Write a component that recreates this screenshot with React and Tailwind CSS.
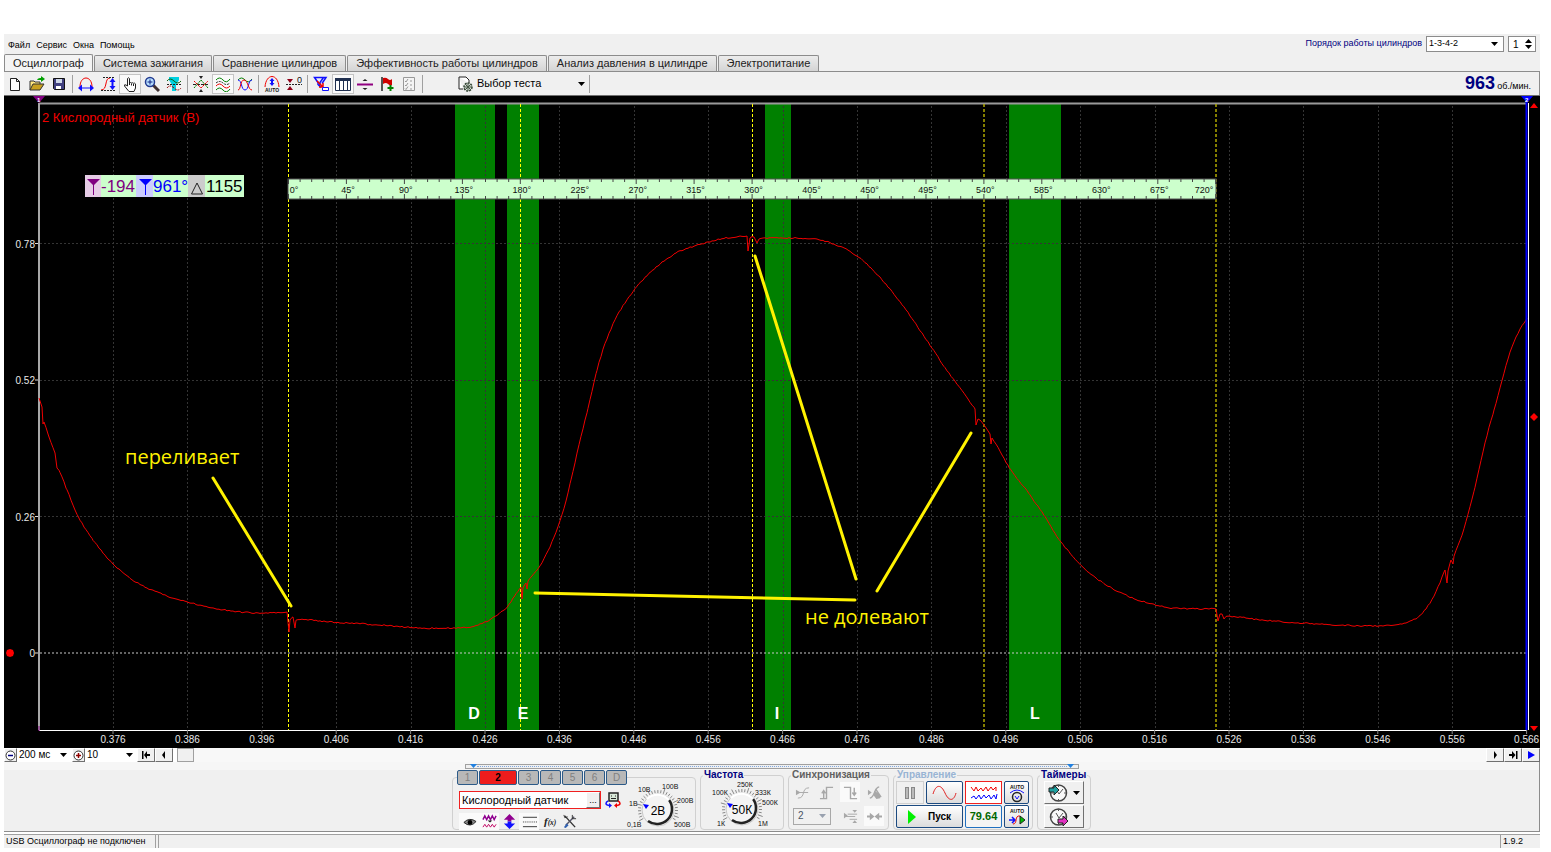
import React, { useState } from 'react'

const TABS = [
  'Осциллограф',
  'Система зажигания',
  'Сравнение цилиндров',
  'Эффективность работы цилиндров',
  'Анализ давления в цилиндре',
  'Электропитание',
]

const MENU = ['Файл', 'Сервис', 'Окна', 'Помощь']

// smooth pieces of the sensor signal, the kinks between them stay sharp
const TRACE = [
  [[39, 398], [42, 407]],
  [[43, 424], [44, 422], [49, 437], [55, 453]],
  [[57, 468], [60, 472], [67, 490], [78, 516], [93, 540], [113, 564], [130, 578], [143, 586], [167, 596], [188, 602], [213, 608], [240, 612], [262, 613], [287, 612]],
  [[289, 632], [290, 620], [293, 617]],
  [[295, 628], [296, 620], [330, 622], [380, 625], [420, 628], [450, 628], [470, 627], [485, 622], [497, 615], [507, 607], [514, 597], [521, 587]],
  [[522, 599], [523, 588], [526, 583]],
  [[527, 589], [528, 581], [540, 566], [552, 542], [562, 515], [571, 480], [579, 445], [588, 408], [597, 370], [605, 344], [617, 316], [635, 289], [654, 269], [668, 258], [680, 251], [708, 242], [726, 238], [747, 236]],
  [[748, 251], [750, 238], [754, 237]],
  [[757, 243], [759, 239], [785, 238], [815, 239], [828, 242], [851, 252], [872, 269], [900, 302], [930, 345], [945, 368], [960, 388], [975, 409]],
  [[976, 425], [978, 419], [984, 425], [990, 434]],
  [[991, 444], [992, 438], [1009, 467], [1030, 495], [1045, 517], [1061, 542], [1081, 565], [1100, 581], [1130, 597], [1152, 604], [1171, 608], [1216, 609]],
  [[1218, 621], [1220, 614], [1222, 614]],
  [[1224, 619], [1226, 616], [1262, 620], [1300, 623], [1337, 625], [1379, 626], [1400, 624], [1415, 619], [1424, 611], [1434, 596], [1445, 570]],
  [[1447, 583], [1448, 571], [1451, 560]],
  [[1453, 564], [1454, 556], [1462, 535], [1475, 487], [1485, 443], [1494, 410], [1502, 381], [1510, 352], [1518, 333], [1527, 318]],
]

const noise = (x) => {
  const n = Math.sin(x * 127.1) * 43758.5
  return (n - Math.floor(n) - 0.5) * 1.3
}

function spline(pts) {
  const out = []
  for (let i = 0; i < pts.length - 1; i++) {
    const p1 = pts[i]
    const p2 = pts[i + 1]
    const m = (a, b) => (b[0] - a[0] ? (b[1] - a[1]) / (b[0] - a[0]) : 0)
    const s1 = m(pts[i - 1] || p1, p2)
    const s2 = m(p1, pts[i + 2] || p2)
    const h = p2[0] - p1[0]
    for (let x = p1[0]; x < p2[0]; x += 2) {
      const t = (x - p1[0]) / h
      const y =
        (2 * t ** 3 - 3 * t ** 2 + 1) * p1[1] +
        (t ** 3 - 2 * t ** 2 + t) * h * s1 +
        (-2 * t ** 3 + 3 * t ** 2) * p2[1] +
        (t ** 3 - t ** 2) * h * s2
      out.push([x, y + (h > 6 ? noise(x) : 0)])
    }
  }
  out.push(pts[pts.length - 1])
  return out
}

const tracePoints = TRACE.flatMap(spline).map(([x, y]) => `${x},${y.toFixed(1)}`).join(' ')

const BANDS = [
  { x: 455, w: 40, label: 'D', lx: 474 },
  { x: 507, w: 32, label: 'E', lx: 523 },
  { x: 765, w: 26, label: 'I', lx: 777 },
  { x: 1009, w: 52, label: 'L', lx: 1035 },
]
const TIMES = Array.from({ length: 20 }, (_, i) => ({ x: 113 + i * 74.4, label: (0.376 + i * 0.01).toFixed(3) }))
const LEVELS = [[243.5, '0.78'], [380, '0.52'], [516.5, '0.26']]
const STROKES = [288.5, 520.5, 752.5, 984, 1216]
const ARROWS = ['M213 478L291 606', 'M755 256L856 579', 'M971 433L877 591', 'M535 593L855 600']

function Chart() {
  return (
    <svg viewBox="4 96 1536 652" className="block w-full h-auto bg-black font-['Liberation_Sans',sans-serif]">
      {BANDS.map((b) => (
        <rect key={b.label} x={b.x} y="103" width={b.w} height="627" fill="#008000" />
      ))}
      <g stroke="#343434" strokeDasharray="2 2" shapeRendering="crispEdges">
        {TIMES.slice(0, 19).map((t) => <path key={t.label} d={`M${Math.round(t.x) + 0.5} 106V730`} />)}
        {LEVELS.map(([y]) => <path key={y} d={`M40 ${y}H1526`} />)}
      </g>
      <path d="M40 653H1526" stroke="#c8c8c8" strokeDasharray="2 2" />
      <path d="M35 243.5h4M35 380h4M35 516.5h4M35 653h4" stroke="#ddd" />
      <path d="M39 103.500H1527" stroke="#9a9a9a" strokeWidth="2" />
      <path d="M39 103V730" stroke="#a8a8a8" strokeWidth="2" />
      <path d="M39 730.5H1527" stroke="#fff" />
      <path d={TIMES.map((t) => `M${t.x} 730v4`).join('')} stroke="#888" />
      {STROKES.map((x, i) => (
        <path key={x} d={`M${x} 104V730`} stroke={i > 2 ? '#b0a800' : '#ffff00'} strokeWidth={i > 2 ? 1.5 : 1} strokeDasharray="3 2" />
      ))}
      <polyline points={tracePoints} fill="none" stroke="#f00000" />
      <path d="M1526.500 98V730" stroke="#00f" strokeWidth="2" />
      <path d="M1528.500 103V730" stroke="#fff" />

      {/* cursor flags and level markers */}
      <path d="M33 96h12l-6 7z" fill="#800080" />
      <path d="M1521 96h12l-6 7z" fill="#00f" />
      <text x="37" y="102" fontSize="6" fontWeight="bold" fill="#fff">1</text>
      <text x="1525" y="102" fontSize="6" fontWeight="bold" fill="#fff">2</text>
      <path d="M1534 103l4 5h-8z" fill="#f00" />
      <path d="M1534 731l4-5h-8z" fill="#f00" />
      <path d="M1534 413l4 4l-4 4l-4-4z" fill="#f00" />
      <path d="M10 649l3 1l1 3l-1 3l-3 1l-3-1l-1-3l1-3z" fill="#f00" />
      <path d="M39 726v5" stroke="#800080" />

      <text x="42" y="122" fontSize="13" fill="#f00000">2 Кислородный датчик (В)</text>
      <g fontSize="10" fill="#e8e8e8" textAnchor="end">
        {[...LEVELS, [653, '0']].map(([y, s]) => <text key={s} x="35" y={y + 4}>{s}</text>)}
      </g>
      <g fontSize="10" fill="#e8e8e8" textAnchor="middle">
        {TIMES.map((t) => <text key={t.label} x={t.x} y="743">{t.label}</text>)}
      </g>
      <g fontSize="16" fontWeight="bold" fill="#fff" textAnchor="middle">
        {BANDS.map((b) => <text key={b.label} x={b.lx} y="719">{b.label}</text>)}
      </g>

      {/* angle ruler */}
      <rect x="288" y="179" width="928" height="20" fill="#ccffcc" stroke="#555" strokeWidth="1" />
      <path
        d={Array.from({ length: 81 }, (_, i) => {
          const n = i % 5 === 0 ? 5 : 3
          return `M${(288.5 + i * 11.59).toFixed(1)} 179v${n}m0 ${20 - n * 2}v${n}`
        }).join('')}
        stroke="#444"
      />
      <g fontSize="9" fill="#101010" textAnchor="middle">
        {Array.from({ length: 17 }, (_, i) => (
          <text key={i} x={i === 0 ? 294 : i === 16 ? 1204 : 290 + i * 57.95} y="193">{`${i * 45}°`}</text>
        ))}
      </g>

      {/* cursor readout */}
      <rect x="85" y="175" width="159" height="22" fill="#ccffcc" />
      <rect x="85" y="175" width="16" height="22" fill="#e6cce6" />
      <rect x="136" y="175" width="17" height="22" fill="#ccccff" />
      <rect x="188" y="175" width="17" height="22" fill="#cccccc" />
      <path d="M87 179h13l-6 6v10h-1v-10z" fill="#800080" />
      <path d="M139 179h13l-6 6v10h-1v-10z" fill="#0000ff" />
      <path d="M197 183l5.500 11h-11z" fill="none" stroke="#222" />
      <g fontSize="17">
        <text x="101" y="192" fill="#800080">-194</text>
        <text x="153" y="192" fill="#0000ff">961°</text>
        <text x="206" y="192" fill="#000">1155</text>
      </g>

      <path d={ARROWS.join('')} stroke="#fff200" strokeWidth="3" strokeLinecap="round" />
      <g fontSize="20" fill="#fff200" className="font-['Open_Sans',sans-serif]">
        <text x="125" y="464">переливает</text>
        <text x="805" y="624">не долевают</text>
      </g>
    </svg>
  )
}

const R = '#f00000'
const B = '#1010ff'
const G = '#008000'

const ICONS = {
  new: <path d="M3.500 2.500h6l3 3v9h-9zM9.500 2.500v3h3" fill="#fff" stroke="#222" />,
  open: (
    <>
      <path d="M1 14V5h4l1 1h5v2" fill="#ffe680" stroke="#333" />
      <path d="M1 14l3-6h11l-4 6z" fill="#c8a020" stroke="#333" />
      <path d="M8 4c1-2 3-2 4-2V0l4 3l-4 3V4z" fill="#00a000" />
    </>
  ),
  save: (
    <>
      <path d="M2.500 2.500h11v11h-10l-1-1z" fill="#404080" stroke="#111" />
      <path d="M5 3h6v4H5z" fill="#cfd8e8" />
      <path d="M5 10h5v3H5z" fill="#fff" />
    </>
  ),
  hspan: (
    <>
      <path d="M2 11C2-1 14-1 14 11" stroke={R} />
      <path d="M0 12l4-3.500v3h8v-3l4 3.500l-4 3.500v-3H4v3z" fill={B} />
    </>
  ),
  vspan: (
    <>
      <path d="M1 14c7 0 3-12 9-12" stroke={R} />
      <path d="M1 14.500h14M3 1.500h12" stroke="#222" strokeDasharray="2 1" />
      <path d="M12.500 2l3 4h-2v4h2l-3 4l-3-4h2V6h-2z" fill={B} />
    </>
  ),
  hand: (
    <>
      <path d="M5.500 10V2.500q1-1.500 2 0V7q1-1 2 0q1-.7 2 .3q1-.7 2 .6V12l-1.500 3.500h-5L2.500 10q-.3-2 1.500-1z" fill="#fff" stroke="#222" />
      <path d="M7.500 7v2M9.500 7.500v2M11.500 8v2" stroke="#222" />
    </>
  ),
  zoom: (
    <>
      <path d="M9 9l6 6" stroke="#403030" strokeWidth="3" />
      <circle cx="6" cy="6" r="4.500" fill="#b8e0ff" stroke="#223a90" strokeWidth="1.500" />
      <path d="M6 3.500v5M3.500 6h5" stroke="#102080" />
    </>
  ),
  filter: (
    <>
      <path d="M3 1h10v3l-3 5v6H6V9L3 4z" fill="#00d0e0" />
      <path d="M1 5q3-4 7 0t7 0" stroke="#106010" />
      <path d="M1 8.500h14" stroke="#222" strokeDasharray="2 1" />
      <path d="M1 12q3-4 7 0t7 0" stroke="#900" strokeDasharray="2 1" />
    </>
  ),
  fit: (
    <>
      <path d="M0 8.500h16" stroke="#222" strokeDasharray="3 1" />
      <path d="M1 12l7-8l7 8" stroke={G} strokeDasharray="2 .5" />
      <path d="M1 5l7 7l7-7" stroke={R} strokeDasharray="2 .5" />
      <path d="M6 0h4L8 3zM6 16h4l-2-3z" fill="#222" />
    </>
  ),
  waves: (
    <>
      <path d="M1 4q3.500-4 7 0t7-1" stroke={G} />
      <path d="M1 7q3.500-3 7 0t7 0" stroke="#222" strokeDasharray="2 1" />
      <path d="M1 10q3.500-4 7 0t7 0" stroke={R} />
      <path d="M1 14q3.500-4 7 0t7-1" stroke={G} />
    </>
  ),
  overlay: (
    <>
      <path d="M1 4q3.500-4 7 0t7-1" stroke={G} />
      <path d="M1 4c4 0 3 10 7 10s3-10 7-10" stroke={B} />
      <path d="M1 14C4 14 3 4 7 4s4 10 8 10" stroke={R} />
    </>
  ),
  auto: (
    <>
      <path d="M1 11C2-3 14-3 15 11" stroke={R} />
      <path d="M8 2l2.500 3H9v2h1.500L8 10L5.500 7H7V5H5.500z" fill={B} />
      <text x="8" y="15.500" fontSize="5" fontWeight="bold" textAnchor="middle" fill="#111">AUTO</text>
    </>
  ),
  zero: (
    <>
      <path d="M0 8.500h16" stroke="#222" strokeDasharray="2 1" />
      <path d="M1 3h6L4 7zM1 14h6l-3-4z" fill="#900018" />
      <text x="11" y="7" fontSize="9" fill="#111">0</text>
    </>
  ),
  trigger: (
    <>
      <path d="M1.500 1.500h9l-3.500 5v4l-2-2v-2zM4 1.500h9l-4 6" stroke={B} strokeWidth="1.500" />
      <path d="M4 5l6 6M10 7v4H6" stroke={R} strokeWidth="1.500" />
      <path d="M9.500 11.500h6v3h-6z" fill="#fff" stroke={B} />
    </>
  ),
  table: (
    <>
      <path d="M.5 2.500h15v12H.5zM4.500 5v9M8.500 5v9M12.500 5v9" fill="#fff" stroke="#203050" />
      <path d="M0 2h16v3H0z" fill="#203050" />
    </>
  ),
  split: (
    <>
      <path d="M0 8.500h16" stroke="#900080" strokeWidth="2" />
      <path d="M5.500 5h5L8 3zM5.500 12h5L8 14z" fill="#222" />
    </>
  ),
  flag: (
    <>
      <path d="M3 1v14" stroke="#222" strokeWidth="1.500" />
      <path d="M4 2q3-1 5 1t4 0v6q-2 1-4-1T4 8z" fill="#d00000" />
      <path d="M11.500 9v6M8.500 12h6" stroke={G} strokeWidth="2" />
    </>
  ),
  list: (
    <>
      <path d="M2.500 1.500h11v13h-11z" fill="#f4f4f4" stroke="#999" />
      <path d="M4 5l1 1l2-3M4 9l1 1l2-3M4 12.500l1 1l2-3M9 5h2M9 9h2M9 13h2" stroke="#999" />
    </>
  ),
  test: (
    <>
      <path d="M2 1h7l3 3v3M2 1v12h4" fill="#fff" stroke="#222" />
      <circle cx="11" cy="11" r="4" fill="#d8e0d8" stroke="#334433" strokeDasharray="2 1" strokeWidth="1.500" />
      <path d="M7 11h8M11 7v8M8 8l6 6M14 8l-6 6" stroke="#445544" />
    </>
  ),
  link: (
    <>
      <path d="M4 1h9v8H4z" fill="#d8e8d8" stroke="#222" strokeWidth="1.500" />
      <path d="M6 4h1M10 4h1M6 6.500h5" stroke="#222" />
      <path d="M3 9q-2 1-2 2.500T4 13.500" stroke={B} strokeWidth="1.500" />
      <path d="M4 11v5l3-2.500z" fill={B} />
      <path d="M13 9q2 1 2 2.500t-3 2" stroke={R} strokeWidth="1.500" />
      <path d="M12 11v5l-3-2.500z" fill={R} />
    </>
  ),
  eye: (
    <>
      <path d="M2 9q6-6 13-1q-6 7-13 1z" fill="#888" stroke="#222" />
      <circle cx="8.500" cy="9" r="2.500" fill="#000" />
    </>
  ),
  squeeze: (
    <>
      <path d="M1 6l2-4l2 4l2-4l2 4l2-4l2 4l2-4" stroke="#900090" strokeWidth="1.500" />
      <path d="M6 7h5L8.500 9z" fill="#222" />
      <path d="M1 14l2-3l2 3l2-3l2 3l2-3l2 3l2-3" stroke="#c00060" />
    </>
  ),
  invert: (
    <>
      <path d="M8 0l6 6h-4v2H6V6H2z" fill="#900090" />
      <path d="M8 16l6-6h-4V8H6v2H2z" fill={B} />
    </>
  ),
  lines: (
    <>
      <path d="M1 3.500h15M1 13.500h15" stroke="#333" />
      <path d="M1 8.500h15" stroke="#333" strokeDasharray="1 1" />
    </>
  ),
  fx: <text x="2" y="12" fontSize="12" fontStyle="italic" fontWeight="bold" fill="#222" className="font-['Liberation_Serif',serif]">f<tspan fontSize="8">(x)</tspan></text>,
  tools: (
    <>
      <path d="M3 2l11 12" stroke="#333" strokeWidth="1.500" />
      <path d="M13 3L4 12" stroke="#556" strokeWidth="1.500" />
      <path d="M2 14l3-4l2 2l-3 3z" fill="#3060b0" />
      <path d="M11 1v4h4M2 1l1 3l3-1" stroke="#333" />
    </>
  ),
  syncAny: (
    <>
      <path d="M1 5v6l5-3z" fill="#a8a8a8" />
      <path d="M3 14c9 0 3-11 12-11M4 8h10" stroke="#a8a8a8" />
    </>
  ),
  syncRise: <path d="M1 14.500h7v-12h7M5 14V7M3 9l2-3l2 3" stroke="#a8a8a8" strokeWidth="1.500" />,
  syncFall: <path d="M1 2.500h7v12h7M12 3v7M10 8l2 3l2-3" stroke="#a8a8a8" strokeWidth="1.500" />,
  syncHand: (
    <>
      <path d="M1 5v6l4-3zM8 6l6 4v4l-4 1l-3-4z" fill="#a8a8a8" />
      <path d="M3 14C9 13 7 3 13 2M9 4l6 9" stroke="#a8a8a8" strokeWidth="1.500" />
    </>
  ),
  syncLevel: (
    <>
      <path d="M1 4v6l4-3zM10 1h5l-2.500 3zM10 15h5l-2.500-3z" fill="#a8a8a8" />
      <path d="M5 5.500h10M3 8h10M7 11h8" stroke="#a8a8a8" />
    </>
  ),
  syncIn: (
    <>
      <path d="M0 8h5M16 8h-5" stroke="#a8a8a8" strokeWidth="2" />
      <path d="M3 4v8l5-4zM13 4v8L8 8z" fill="#a8a8a8" />
    </>
  ),
}

function Icon({ name, className = 'w-4 h-4' }) {
  return <svg viewBox="0 0 16 16" fill="none" className={`${className} shrink-0`} aria-hidden="true">{ICONS[name]}</svg>
}

function Caret({ className = 'fill-black' }) {
  return <svg viewBox="0 0 7 4" className={`${className} w-[7px] h-1 shrink-0`} aria-hidden="true"><path d="M0 0h7L3.500 4z" /></svg>
}

function Select({ label, options, className, muted }) {
  return (
    <span className={`relative flex items-center ${className}`}>
      <select aria-label={label} className={`appearance-none w-full h-full bg-transparent pl-0.5 text-[10px] leading-3 ${muted ? 'text-gray-600' : 'text-black'}`}>
        {options.map((o) => <option key={o}>{o}</option>)}
      </select>
      <span className="absolute right-1 pointer-events-none flex"><Caret className={muted ? 'fill-gray-400' : 'fill-black'} /></span>
    </span>
  )
}

const TOOLBAR = [
  ['new', 'open', 'save'],
  ['hspan', 'vspan', 'hand', 'zoom', 'filter'],
  ['fit', 'waves', 'overlay'],
  ['auto', 'zero'],
  ['trigger', 'table', 'split', 'flag', 'list'],
]
const PRESSED = ['hand', 'waves', 'table']

function Toolbar() {
  return (
    <div className="flex items-center h-6 border-t border-r border-[#8c8c8c] bg-[#f0f0f0]">
      {TOOLBAR.map((group, i) => (
        <div key={i} className="flex items-center">
          {group.map((name) => (
            <button key={name} aria-label={name} className={`w-[22px] h-[20px] flex items-center justify-center ${PRESSED.includes(name) ? 'bg-[#fafafa] border border-[#c4c4c4]' : ''}`}>
              <Icon name={name} />
            </button>
          ))}
          <span className="w-px h-[18px] bg-[#a0a0a0] mx-0.5" />
        </div>
      ))}
      <button className="flex items-center gap-1 ml-8 w-[128px] text-[11px]">
        <Icon name="test" />
        <span className="flex-1 text-left">Выбор теста</span>
        <Caret />
      </button>
      <span className="w-px h-[18px] bg-[#a0a0a0] ml-1" />
      <div className="ml-auto flex items-baseline gap-0.5 pr-2">
        <span className="text-[18px] leading-5 font-bold text-[#000080]">963</span>
        <span className="text-[9px]">об./мин.</span>
      </div>
    </div>
  )
}

const bevel = 'border border-t-white border-l-white border-r-[#707070] border-b-[#707070] bg-[#f0f0f0] flex items-center justify-center'

function NavButton({ label, d, blue }) {
  return (
    <button aria-label={label} className={`${bevel} w-[18px] h-[14px]`}>
      <svg viewBox="0 0 10 8" className="w-[10px] h-2" fill={blue ? '#0000ff' : '#000'}><path d={d} /></svg>
    </button>
  )
}

function ZoomButton({ label, d, color }) {
  return (
    <button aria-label={label} className={`${bevel} w-[13px] h-[14px]`}>
      <svg viewBox="0 0 11 11" className="w-[11px] h-[11px] shrink-0" fill="none">
        <circle cx="5.500" cy="5.500" r="4.500" fill="#fff" stroke="#333" />
        <path d={d} stroke={color} strokeWidth="1.500" />
      </svg>
    </button>
  )
}

function TimeBar() {
  return (
    <div className="flex items-center h-[14px] bg-white">
      <ZoomButton label="Уменьшить" d="M3 5.500h5" color="#000080" />
      <Select label="Развёртка" options={['200 мс', '100 мс']} className="w-[54px] h-[14px]" />
      <span className="w-px" />
      <ZoomButton label="Увеличить" d="M3 5.500h5M5.500 3v5" color="#900000" />
      <Select label="Масштаб" options={['10', '20']} className="w-[52px] h-[14px]" />
      <NavButton label="В начало" d="M1 0h1.500v8H1zM6 0v8L3 4zM6 3h3v2H6z" />
      <NavButton label="Назад" d="M6 0v8L3 4z" />
      <input type="range" aria-label="Прокрутка" defaultValue="0" className="appearance-none flex-1 min-w-0 h-[14px] ml-1 bg-[#f8f8f8] [&::-webkit-slider-thumb]:appearance-none [&::-webkit-slider-thumb]:w-[17px] [&::-webkit-slider-thumb]:h-[14px] [&::-webkit-slider-thumb]:bg-[#f0f0f0] [&::-webkit-slider-thumb]:border [&::-webkit-slider-thumb]:border-[#a0a0a0]" />
      <NavButton label="Вперёд" d="M4 0v8l3-4z" />
      <NavButton label="В конец" d="M8 0h1.500v8H8zM4 0v8l3.500-4zM1 3h3v2H1z" />
      <NavButton label="Воспроизвести" d="M2 0v8l7-4z" blue />
    </div>
  )
}

function Dial({ value, marks, label }) {
  const ticks = Array.from({ length: 27 }, (_, i) => ((150 + i * 9.2) * Math.PI) / 180)
  return (
    <svg viewBox="0 0 74 54" className="w-[74px] h-[54px] shrink-0" role="img" aria-label={label}>
      <path
        d={ticks.map((a, i) => {
          const r = i % 5 === 0 ? 22 : 20
          return `M${37 + 17 * Math.cos(a)} ${33 + 17 * Math.sin(a)}L${37 + r * Math.cos(a)} ${33 + r * Math.sin(a)}`
        }).join('')}
        stroke="#888"
      />
      <circle cx="37" cy="33" r="16" fill="#f4f4f4" stroke="#c8c8c8" strokeWidth="1" />
      <path d="M48 23A15 15 0 0 1 27 44" fill="none" stroke="#222" strokeWidth="2.500" />
      <path d="M26 22A15 15 0 0 1 48 23" fill="none" stroke="#fff" strokeWidth="2" />
      <path d="M22 27l6 1l-3 4z" fill="#0000ff" />
      <text x="37" y="38" fontSize="12" textAnchor="middle">{value}</text>
      <g fontSize="7" fill="#111">
        {marks.map(([x, y, s]) => <text key={s} x={x} y={y}>{s}</text>)}
      </g>
    </svg>
  )
}

function Group({ title, titleClass, className, children }) {
  return (
    <fieldset className={`h-[60px] rounded border border-[#d0d0d0] ${className}`}>
      <legend className={`ml-0.5 px-px h-[10px] text-[10px] leading-[10px] font-bold whitespace-nowrap ${titleClass}`}>{title}</legend>
      {children}
    </fieldset>
  )
}

const VOLT_MARKS = [[6, 50, '0,1В'], [8, 29, '1В'], [17, 15, '10В'], [41, 12, '100В'], [56, 26, '200В'], [53, 50, '500В']]
const FREQ_MARKS = [[12, 50, '1К'], [7, 19, '100К'], [32, 11, '250К'], [50, 19, '333К'], [57, 29, '500К'], [53, 50, '1М']]
const ctl = 'h-[23px] flex items-center justify-center rounded-xs border border-[#1c4a80] bg-linear-to-b from-white to-[#dcdcdc]'

function ChannelPanel() {
  const [channel, setChannel] = useState('2')
  return (
    <fieldset className="h-[60px] w-[242px] rounded border border-[#d0d0d0]">
      <legend className="ml-1 h-[15px] flex gap-px">
        {['1', '2', '3', '4', '5', '6', 'D'].map((c) => (
          <button
            key={c}
            onClick={() => setChannel(c)}
            className={`h-[15px] rounded-xs border border-[#2c5a88] text-[10px] leading-3 ${c === channel ? 'w-[38px] bg-[#ee1c1c] text-black font-bold' : 'w-[21px] bg-[#b8b8b8] text-[#808080]'}`}
          >
            {c}
          </button>
        ))}
      </legend>
      <div className="flex -mt-2">
        <div className="w-[168px] pl-1.5 pt-3.5">
          <div className="flex items-center gap-1">
            <div className="flex w-[142px] h-[18px] border border-[#f02020] bg-white">
              <input aria-label="Датчик" defaultValue="Кислородный датчик" className="flex-1 min-w-0 pl-0.5 text-[11px] bg-white" />
              <button aria-label="Выбрать датчик" className={`${bevel} w-[14px] text-[9px] leading-none`}>...</button>
            </div>
            <Icon name="link" className="w-4 h-4" />
          </div>
          <div className="flex items-center pt-1">
            {['eye', 'squeeze', 'invert', 'lines', 'fx', 'tools'].map((n) => (
              <button key={n} aria-label={n} className={`w-5 h-[17px] flex items-center justify-center ${['eye', 'squeeze', 'lines'].includes(n) ? 'bg-[#fafafa]' : ''}`}>
                <Icon name={n} className="w-[15px] h-[15px]" />
              </button>
            ))}
          </div>
        </div>
        <Dial value="2В" marks={VOLT_MARKS} label="Чувствительность" />
      </div>
    </fieldset>
  )
}

function ControlPanel() {
  return (
    <div className="flex justify-center gap-1 h-[62px] bg-[#f0f0f0] border-b border-r border-[#8c8c8c]">
      <ChannelPanel />
      <Group title="Частота" titleClass="text-[#000080]" className="w-[84px]">
        <div className="flex justify-center -mt-1">
          <Dial value="50К" marks={FREQ_MARKS} label="Частота дискретизации" />
        </div>
      </Group>
      <Group title="Синхронизация" titleClass="text-[#606060]" className="w-[101px]">
        <div className="grid grid-cols-4 gap-x-1 gap-y-1 px-1 pt-0.5 items-center justify-items-center">
          {['syncAny', 'syncRise', 'syncFall', 'syncHand'].map((n) => (
            <button key={n} aria-label={n} disabled className={`w-5 h-5 flex items-center justify-center ${n === 'syncFall' ? 'bg-[#fafafa]' : ''}`}><Icon name={n} className="w-[15px] h-[15px]" /></button>
          ))}
          <Select label="Канал синхронизации" options={['2', '1']} muted className="col-span-2 w-[38px] h-[17px] border border-[#a8a8a8] pl-0.5 justify-self-start" />
          {['syncLevel', 'syncIn'].map((n) => (
            <button key={n} aria-label={n} disabled className={`w-5 h-5 flex items-center justify-center ${n === 'syncIn' ? 'bg-[#fafafa]' : ''}`}><Icon name={n} className="w-[15px] h-[15px]" /></button>
          ))}
        </div>
      </Group>
      <Group title="Управление" titleClass="text-[#98b4d4]" className="w-[140px]">
        <div className="flex flex-col gap-px px-0.5 pt-px">
          <div className="flex gap-0.5">
            <button aria-label="Пауза" disabled className="w-7 h-[23px] flex items-center justify-center gap-0.5 border border-[#d0d0d0]">
              <span className="w-1 h-3 border border-[#888] bg-[#bbb]" />
              <span className="w-1 h-3 border border-[#888] bg-[#bbb]" />
            </button>
            <button aria-label="Один канал" className={`${ctl} w-[37px]`}>
              <svg viewBox="0 0 28 16" className="w-7 h-4" fill="none"><path d="M2 9C5-1 10-1 14 8s9 8 11 0" stroke="#e02020" /></svg>
            </button>
            <button aria-label="Все каналы" className="w-[37px] h-[23px] flex items-center justify-center border border-[#f02020] bg-white">
              <svg viewBox="0 0 28 16" className="w-7 h-4" fill="none">
                <path d="M1 2l3 4l2-4l2 4l3-3l2 3l3-4l2 4l3-4l2 3l3-3v4" stroke="#f00000" />
                <path d="M1 13l3-2l2 3l3-4l2 4l3-4l2 3l3-3l2 4l3-4l2 4l1-5" stroke="#0000ff" />
              </svg>
            </button>
            <button aria-label="Авто развёртка" className={`${ctl} w-[25px]`}>
              <svg viewBox="0 0 20 20" className="w-5 h-5" fill="none">
                <text x="10" y="6" fontSize="5" fontWeight="bold" textAnchor="middle" fill="#111">AUTO</text>
                <circle cx="10" cy="14" r="4.500" stroke="#222" strokeWidth="1.500" />
                <path d="M8 13l2 3l2-3M3 10q7-6 14 0" stroke={B} />
              </svg>
            </button>
          </div>
          <div className="flex gap-0.5">
            <button className={`${ctl} w-[67px] text-[10px] font-bold gap-3`}>
              <svg viewBox="0 0 8 14" className="w-2 h-[14px]"><path d="M0 0l8 7l-8 7z" fill="#00f000" /></svg>
              Пуск
            </button>
            <output className="w-[37px] h-[23px] flex items-center justify-center rounded-xs border border-[#2070c0] bg-[#f4f4f4] text-[11px] font-bold text-[#006800]">79.64</output>
            <button aria-label="Авто пуск" className={`${ctl} w-[25px]`}>
              <svg viewBox="0 0 20 20" className="w-5 h-5" fill="none">
                <text x="10" y="6" fontSize="5" fontWeight="bold" textAnchor="middle" fill="#111">AUTO</text>
                <path d="M2 13h5M5 10l3 3l-3 3" stroke={B} strokeWidth="1.500" />
                <path d="M6 17c5 0 1-9 7-8" stroke={R} />
                <path d="M13 9l5 4l-5 4z" fill="#00c000" stroke="#222" />
              </svg>
            </button>
          </div>
        </div>
      </Group>
      <Group title="Таймеры" titleClass="text-[#000080]" className="w-[54px]">
        <div className="flex flex-col items-center gap-px pt-px">
          {[['Таймер запуска', '#20a0a0', 'M1 5h5V2l5 5l-5 5V9H1z'], ['Таймер остановки', '#e030c0', 'M10 12h5V9l5 5l-5 5v-3h-5z']].map(([label, color, d]) => (
            <button key={label} aria-label={label} className={`${bevel} w-10 h-[23px] gap-1`}>
              <svg viewBox="0 0 21 20" className="w-[21px] h-5" fill="none">
                <circle cx="10.500" cy="10" r="8" fill="#f8f8f8" stroke="#444" strokeWidth="1.500" />
                <path d="M8 6l3 5l4-5M10.500 2v2M10.500 16v2M3 10h2M16 10h2" stroke="#555" />
                <path d={d} fill={color} stroke="#222" />
              </svg>
              <Caret />
            </button>
          ))}
        </div>
      </Group>
    </div>
  )
}

export default function App() {
  const [tab, setTab] = useState(TABS[0])

  return (
    <div className="min-h-screen bg-white pt-[34px] pl-1 pr-[11px] text-black font-['Liberation_Sans',sans-serif]">
      {/* Menu */}
      <header className="flex items-center justify-between h-5 bg-[#f0f0f0] text-[9px]">
        <nav className="flex gap-[6px] pl-1 pt-1">
          {MENU.map((m) => <button key={m}>{m}</button>)}
        </nav>
        <div className="flex items-center gap-1 pr-1">
          <label htmlFor="order" className="text-[#000080]">Порядок работы цилиндров</label>
          <span className="relative flex items-center">
            <select id="order" className="appearance-none w-[78px] h-4 pl-0.5 border border-[#8c8c8c] bg-white text-[9px]">
              <option>1-3-4-2</option>
              <option>1-2-4-3</option>
            </select>
            <span className="absolute right-1.5 pointer-events-none flex"><Caret /></span>
          </span>
          <span className="relative flex items-center">
            <input aria-label="Номер цилиндра" defaultValue="1" className="w-7 h-4 pl-1 border border-[#8c8c8c] bg-white text-[10px]" />
            <svg viewBox="0 0 7 10" className="absolute right-1 w-[7px] h-[10px] pointer-events-none"><path d="M0 4h7L3.500 0zM0 6h7L3.500 10z" /></svg>
          </span>
        </div>
      </header>

      {/* Tabs */}
      <div role="tablist" className="flex items-end gap-px h-[17px] bg-[#f0f0f0]">
        {TABS.map((t) => (
          <button
            key={t}
            role="tab"
            aria-selected={t === tab}
            onClick={() => setTab(t)}
            className={`px-2 border border-b-0 border-[#8c8c8c] rounded-t-xs text-[11px] leading-none whitespace-nowrap text-[#222] ${t === tab ? 'h-[17px] bg-[#f4f4f4]' : 'h-4 bg-linear-to-b from-[#ececec] to-[#d4d4d4]'}`}
          >
            {t}
          </button>
        ))}
      </div>

      <Toolbar />
      <div className="h-px bg-[#707070]" />
      <Chart />
      <TimeBar />

      <div className="flex justify-center items-center h-2 bg-[#f6f6f6] border-r border-[#8c8c8c]">
        <div className="w-[614px] h-[5px] flex items-center justify-between px-1 border border-[#a0a0a0] bg-[#f0f0f0]">
          <Caret className="fill-[#2080e0]" />
          <span className="flex-1 border-t border-dotted border-[#80a8e0]" />
          <Caret className="fill-[#2080e0]" />
        </div>
      </div>

      <ControlPanel />

      {/* Status bar */}
      <footer className="flex gap-0.5 mt-0.5 h-[14px] bg-[#f0f0f0] border-t border-[#a0a0a0] text-[9px] leading-[13px]">
        <span className="w-[152px] pl-0.5 border-r border-[#a0a0a0] whitespace-nowrap">USB Осциллограф не подключен</span>
        <span className="flex-1 border-l border-[#a0a0a0]" />
        <span className="w-10 pl-0.5 border-l border-[#a0a0a0]">1.9.2</span>
      </footer>
    </div>
  )
}
